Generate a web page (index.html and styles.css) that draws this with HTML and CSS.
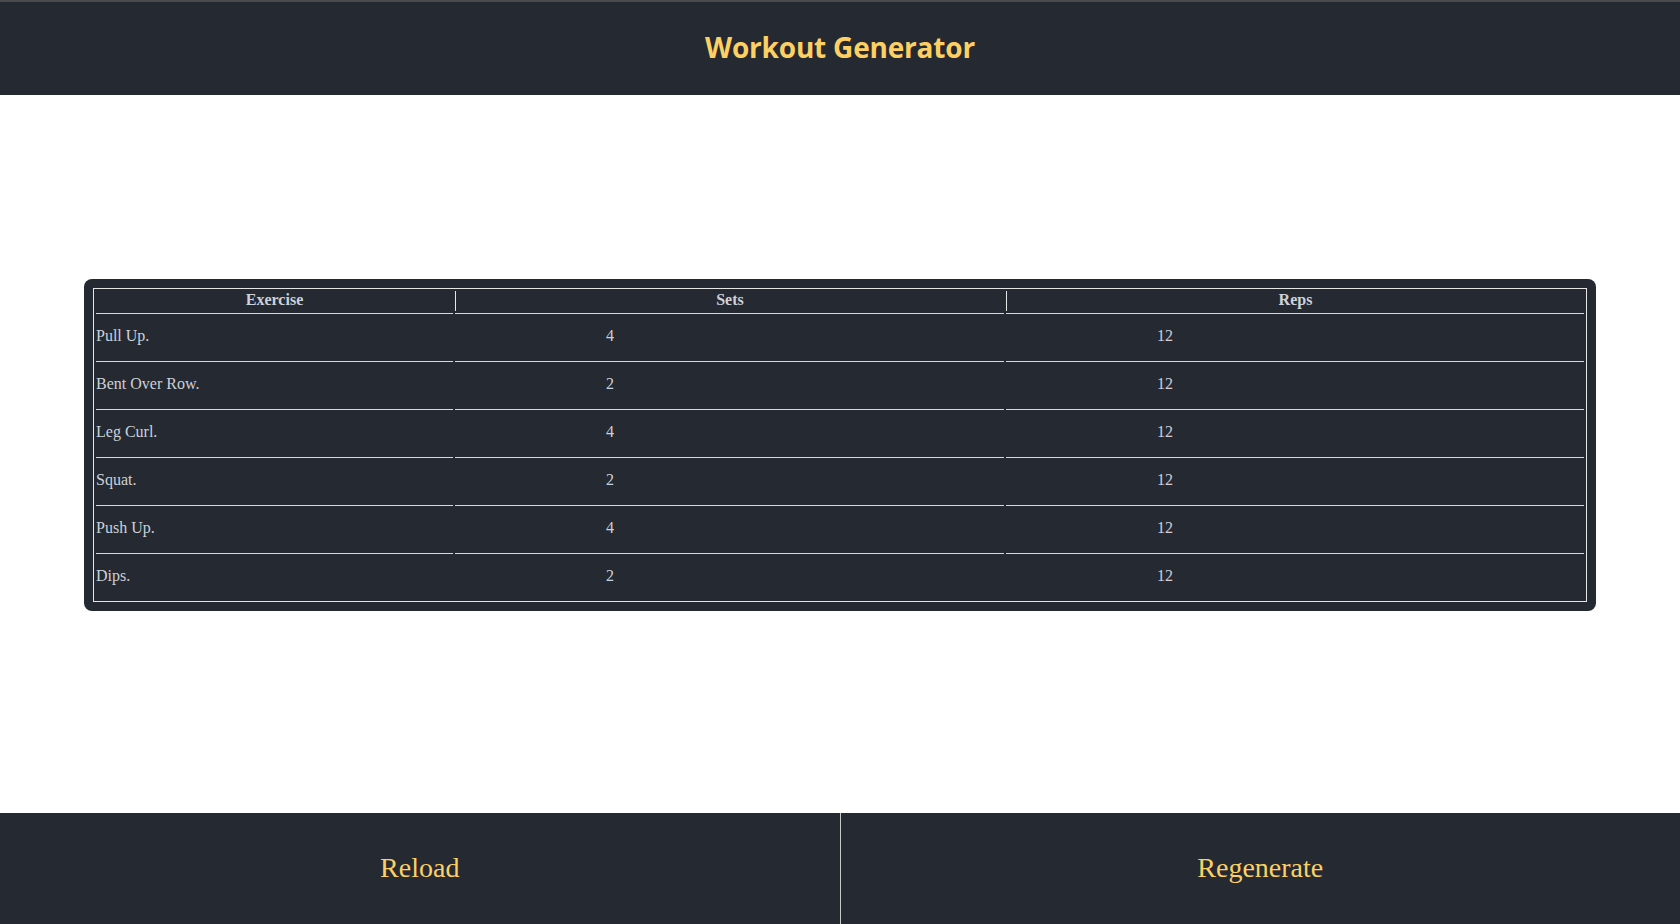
FILE: index.html
```html
<!DOCTYPE html>
<html lang="en">
<head>
<meta charset="utf-8">
<title>Workout Generator</title>
<link rel="stylesheet" href="styles.css">
</head>
<body>
<header class="topbar">
  <h1 class="title">Workout Generator</h1>
</header>
<main class="main">
  <div class="card">
    <table class="workout">
      <colgroup>
        <col class="col-ex">
        <col class="col-sets">
        <col class="col-reps">
      </colgroup>
      <thead>
        <tr><th>Exercise</th><th>Sets</th><th>Reps</th></tr>
      </thead>
      <tbody>
        <tr><td>Pull Up.</td><td class="num">4</td><td class="num">12</td></tr>
        <tr><td>Bent Over Row.</td><td class="num">2</td><td class="num">12</td></tr>
        <tr><td>Leg Curl.</td><td class="num">4</td><td class="num">12</td></tr>
        <tr><td>Squat.</td><td class="num">2</td><td class="num">12</td></tr>
        <tr><td>Push Up.</td><td class="num">4</td><td class="num">12</td></tr>
        <tr><td>Dips.</td><td class="num">2</td><td class="num">12</td></tr>
      </tbody>
    </table>
  </div>
</main>
<footer class="actions">
  <button class="action action-left" type="button">Reload</button>
  <button class="action" type="button">Regenerate</button>
</footer>
</body>
</html>
```
FILE: styles.css
```css
* { box-sizing: border-box; }
html, body { margin: 0; padding: 0; }
body {
  background: #ffffff;
  font-family: "Liberation Serif", "Times New Roman", serif;
  height: 924px;
  display: flex;
  flex-direction: column;
  overflow: hidden;
}
.topbar {
  height: 95px;
  background: #252932;
  border-top: 2px solid #4b4b4d;
  display: flex;
  align-items: center;
  justify-content: center;
  flex: none;
}
.title {
  margin: 0;
  padding-bottom: 4px;
  font-family: "Open Sans", "DejaVu Sans", sans-serif;
  font-weight: 700;
  font-size: 28px;
  letter-spacing: -0.2px;
  color: #fcd062;
}
.main {
  flex: 1;
  display: flex;
  align-items: center;
  justify-content: center;
  padding-bottom: 18px;
}
.card {
  width: 90%;
  background: #252932;
  border-radius: 8px;
  padding: 9px;
}
.workout {
  width: 100%;
  border: 1px solid #e6e6e6;
  border-collapse: separate;
  border-spacing: 2px;
  color: #cdd1d8;
  font-size: 16px;
}
.col-ex { width: 357px; }
.col-sets { width: 549px; }
.workout th {
  padding: 0 1px 2px;
  line-height: 18px;
  font-weight: 700;
  text-align: center;
}
.workout th + th { border-left: 1px solid #e6e6e6; }
.workout td {
  border-top: 1px solid #d9d9d9;
  padding: 12px 0 14px;
  line-height: 19px;
  text-align: left;
}
.workout td.num { padding-left: 151px; }
.actions {
  flex: none;
  height: 111px;
  display: flex;
  background: #252932;
}
.action {
  flex: 1;
  border: none;
  background: #252932;
  color: #fcd062;
  font-family: "Liberation Serif", "Times New Roman", serif;
  font-size: 28px;
  padding: 0 0 2px;
  margin: 0;
}
.action-left { border-right: 1px solid #c8c8c8; }
```
